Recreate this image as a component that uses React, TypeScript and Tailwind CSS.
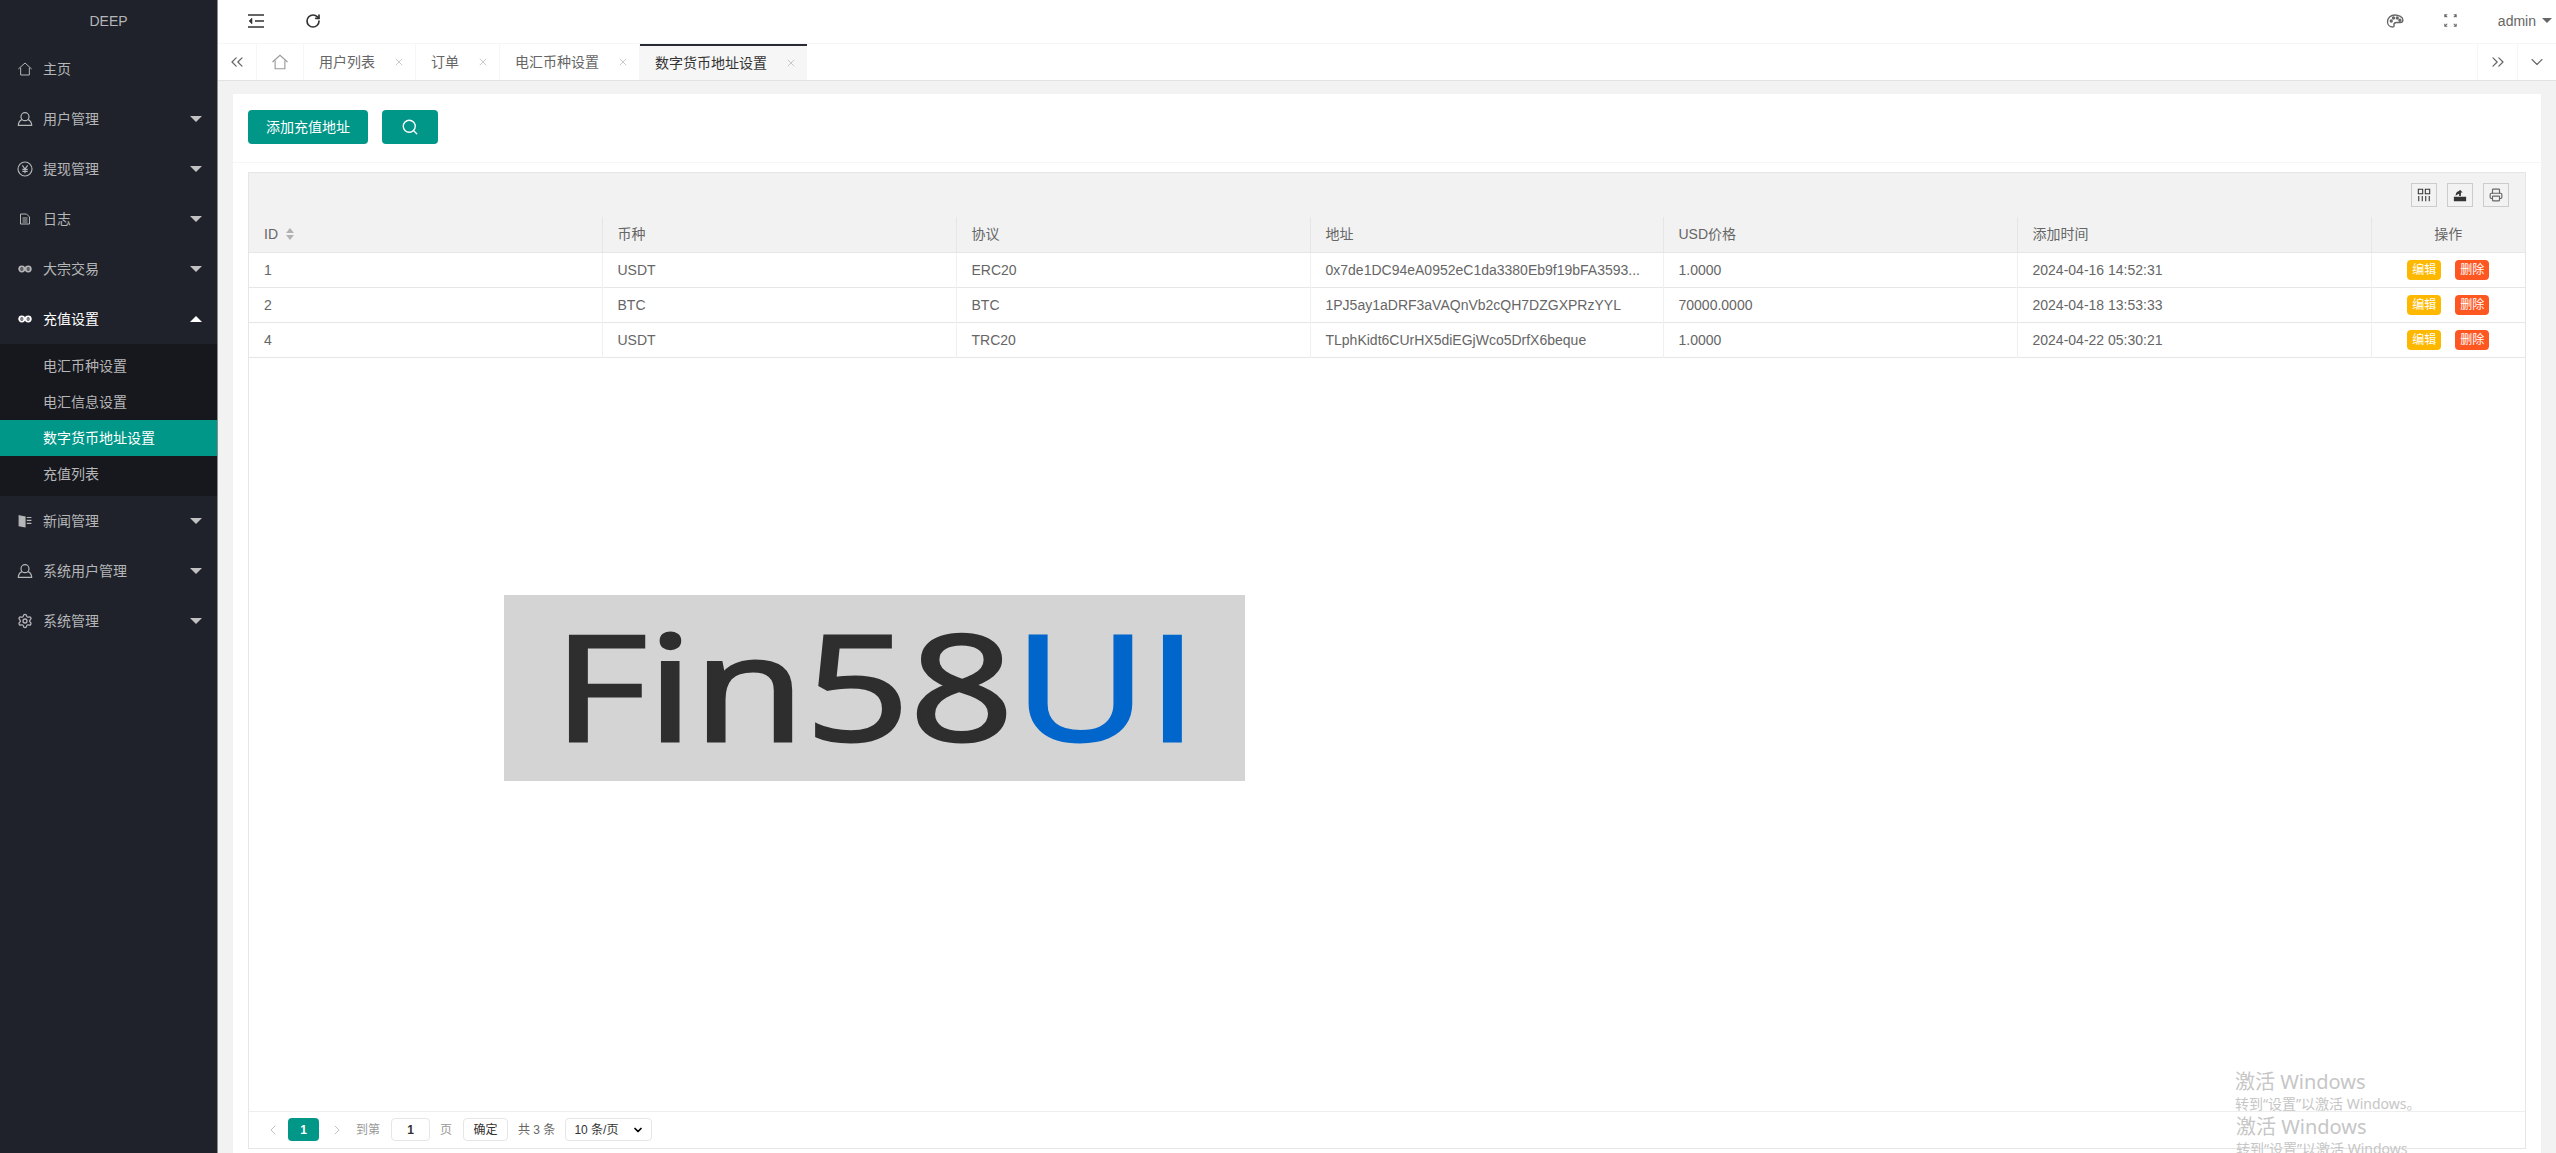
import { ChevronDown, ChevronLeft, ChevronRight, ChevronsLeft, ChevronsRight, Printer, RotateCw, Search, Settings, X } from 'lucide-react';
import type { ReactNode } from 'react';

function HomeIcon({ className }: { className?: string }) {
  return (
    <svg viewBox="0 0 24 24" fill="none" stroke="currentColor" strokeWidth="1.5" className={className}>
      <path d="M2 12 12 3l10 9" />
      <path d="M5.5 10v11h13V10" />
    </svg>
  );
}

function UserIcon() {
  return (
    <svg viewBox="0 0 24 24" fill="none" stroke="currentColor" strokeWidth="1.8" className="h-4 w-4">
      <circle cx="12" cy="8.5" r="6" />
      <path d="M7.5 13C4 14.5 2 17 2 21.5h20c0-4.500-2-7-5.500-8.500" />
    </svg>
  );
}

function YenIcon() {
  return (
    <svg viewBox="0 0 24 24" fill="none" stroke="currentColor" strokeWidth="1.7" className="h-4 w-4">
      <circle cx="12" cy="12" r="10.500" />
      <path d="m8 6.500 4 5.500 4-5.500M12 12v6.500M8 12.500h8M8 15.500h8" />
    </svg>
  );
}

function LogIcon() {
  return (
    <svg viewBox="0 0 24 24" fill="none" stroke="currentColor" strokeWidth="2" className="h-3 w-3">
      <path d="M3 2h12l6 6v14H3zM7 10h10M7 14h10M7 18h10" />
    </svg>
  );
}

function LinkIcon() {
  return (
    <svg viewBox="0 0 24 24" fill="none" stroke="currentColor" strokeWidth="2.800" className="h-[14px] w-[14px]">
      <circle cx="6.500" cy="12" r="4.500" />
      <circle cx="17.500" cy="12" r="4.500" />
      <path d="M1 12h22" strokeWidth="1.500" />
    </svg>
  );
}

function NewsIcon() {
  return (
    <svg viewBox="0 0 24 24" fill="none" stroke="currentColor" strokeWidth="2" className="h-[14px] w-[14px]">
      <path d="M2 3l10 2v17L2 20z" fill="currentColor" />
      <path d="M15 6h8M15 11h8M15 16h8" />
    </svg>
  );
}

function Caret({ up, color = 'gray' }: { up?: boolean; color?: string }) {
  if (up) {
    return <span className="h-0 w-0 border-x-[6px] border-b-[6px] border-x-transparent border-b-white" />;
  }
  return (
    <span
      className={
        color === 'gray'
          ? 'h-0 w-0 border-x-[6px] border-t-[6px] border-x-transparent border-t-[#c2c2c3]'
          : 'h-0 w-0 border-x-[5px] border-t-[5px] border-x-transparent border-t-[#666666]'
      }
    />
  );
}

function NavItem({ icon, label, open }: { icon: ReactNode; label: string; open?: boolean }) {
  return (
    <div className={`flex h-[50px] items-center pl-[17px] pr-[15px] ${open ? 'text-white' : 'text-[#b5b6b8]'}`}>
      <span className="flex w-[26px] items-center justify-start">
        <span className="flex w-4 justify-center">{icon}</span>
      </span>
      <span className="flex-1">{label}</span>
      {label !== '主页' && <Caret up={open} />}
    </div>
  );
}

function SubItem({ label, active }: { label: string; active?: boolean }) {
  return (
    <div className={`flex h-9 items-center pl-[43px] ${active ? 'bg-[#009688] text-white' : 'text-[#b5b6b8]'}`}>
      {label}
    </div>
  );
}

function Sidebar() {
  return (
    <aside className="flex h-full w-[218px] shrink-0 flex-col border-r border-[#8a8a8a] bg-[#1f222a] text-sm">
      <div className="flex h-11 items-center justify-center pb-[3px] text-[#b5b6b8]">DEEP</div>
      <NavItem icon={<HomeIcon className="h-4 w-4" />} label="主页" />
      <NavItem icon={<UserIcon />} label="用户管理" />
      <NavItem icon={<YenIcon />} label="提现管理" />
      <NavItem icon={<LogIcon />} label="日志" />
      <NavItem icon={<LinkIcon />} label="大宗交易" />
      <NavItem icon={<LinkIcon />} label="充值设置" open />
      <div className="bg-[#17181d] py-1">
        <SubItem label="电汇币种设置" />
        <SubItem label="电汇信息设置" />
        <SubItem label="数字货币地址设置" active />
        <SubItem label="充值列表" />
      </div>
      <NavItem icon={<NewsIcon />} label="新闻管理" />
      <NavItem icon={<UserIcon />} label="系统用户管理" />
      <NavItem icon={<Settings className="h-4 w-4" />} label="系统管理" />
    </aside>
  );
}

function TopBar() {
  return (
    <div className="flex h-11 items-center justify-between border-b border-[#f6f6f6] bg-white pb-[2px] pl-[30px] pr-[4px] text-[#333333]">
      <div className="flex items-center gap-[41px]">
        <svg viewBox="0 0 16 16" fill="none" stroke="currentColor" strokeWidth="1.500" className="h-4 w-4">
          <path d="M0 2h16M7 8h9M0 14h16" />
          <path d="M4 5 1 8l3 3z" fill="currentColor" strokeWidth="0.500" />
        </svg>
        <RotateCw className="h-4 w-4" strokeWidth={2.500} />
      </div>
      <div className="flex items-center text-[#666666]">
        <svg viewBox="0 0 24 24" fill="none" stroke="currentColor" strokeWidth="1.800" className="h-[18px] w-[18px]">
          <path d="M12 4C6 4 2 8 2 13c0 4 3 7 7 7 2 0 2-1.500 1.500-3 0-2 1.500-3 3.500-3h5c2 0 3.500-1 3.500-3.500C22.500 7 17 4 12 4z" />
          <circle cx="7" cy="12" r="1.300" fill="currentColor" />
          <circle cx="10" cy="8" r="1.300" fill="currentColor" />
          <circle cx="15" cy="8" r="1.300" fill="currentColor" />
          <circle cx="18.500" cy="11" r="1.300" fill="currentColor" />
        </svg>
        <svg viewBox="0 0 16 16" fill="none" stroke="currentColor" strokeWidth="1.300" className="ml-[40px] h-[13px] w-[13px]">
          <path d="M1 4V1h3M12 1h3v3M1 12v3h3M15 12v3h-3M1 1l3 3M15 1l-3 3M1 15l3-3M15 15l-3-3" />
        </svg>
        <span className="ml-[41px] mr-[6px] text-sm">admin</span>
        <Caret color="dark" />
      </div>
    </div>
  );
}

const tabs = [
  { label: '用户列表', width: 'w-[112px]' },
  { label: '订单', width: 'w-[84px]' },
  { label: '电汇币种设置', width: 'w-[140px]' },
];

function TabBar() {
  return (
    <div className="flex h-[37px] shrink-0 border-b border-[#e2e2e2] bg-white text-sm text-[#666666]">
      <div className="flex w-[39px] items-center justify-center border-r border-[#f6f6f6]">
        <ChevronsLeft className="h-5 w-5" strokeWidth={1.500} />
      </div>
      <div className="flex w-[47px] items-center justify-center border-r border-[#f6f6f6] text-[#999999]">
        <HomeIcon className="h-[18px] w-[18px]" />
      </div>
      {tabs.map((tab) => (
        <div key={tab.label} className={`flex ${tab.width} items-center justify-between border-r border-[#f6f6f6] pl-[15px] pr-[10px]`}>
          <span>{tab.label}</span>
          <X className="h-3 w-3 text-[#b8b8b8]" strokeWidth={1.500} />
        </div>
      ))}
      <div className="flex w-[167px] items-center justify-between border-t-2 border-[#292b34] bg-[#f6f6f6] pl-[15px] pr-[10px] text-[#333333]">
        <span>数字货币地址设置</span>
        <X className="h-3 w-3 text-[#b8b8b8]" strokeWidth={1.500} />
      </div>
      <div className="flex-1" />
      <div className="flex w-10 items-center justify-center border-l border-[#f6f6f6]">
        <ChevronsRight className="h-5 w-5" strokeWidth={1.500} />
      </div>
      <div className="flex w-[39px] items-center justify-center border-l border-[#f6f6f6]">
        <ChevronDown className="h-5 w-5" strokeWidth={1.300} />
      </div>
    </div>
  );
}

function ToolButton({ children }: { children: ReactNode }) {
  return (
    <span className="flex h-6 w-[26px] items-center justify-center border border-[#cccccc] text-[#333333]">
      {children}
    </span>
  );
}

const columns = [
  { label: 'ID', key: 'id' },
  { label: '币种', key: 'coin' },
  { label: '协议', key: 'protocol' },
  { label: '地址', key: 'address' },
  { label: 'USD价格', key: 'price' },
  { label: '添加时间', key: 'time' },
];

const rows = [
  { id: '1', coin: 'USDT', protocol: 'ERC20', address: '0x7de1DC94eA0952eC1da3380Eb9f19bFA3593...', price: '1.0000', time: '2024-04-16 14:52:31' },
  { id: '2', coin: 'BTC', protocol: 'BTC', address: '1PJ5ay1aDRF3aVAQnVb2cQH7DZGXPRzYYL', price: '70000.0000', time: '2024-04-18 13:53:33' },
  { id: '4', coin: 'USDT', protocol: 'TRC20', address: 'TLphKidt6CUrHX5diEGjWco5DrfX6beque', price: '1.0000', time: '2024-04-22 05:30:21' },
];

function DataTable() {
  return (
    <table className="w-full table-fixed border-collapse text-sm text-[#666666]">
      <colgroup>
        <col className="w-[353px]" />
        <col className="w-[354px]" />
        <col className="w-[354px]" />
        <col className="w-[353px]" />
        <col className="w-[354px]" />
        <col className="w-[354px]" />
        <col />
      </colgroup>
      <thead>
        <tr className="h-[35px] bg-[#f2f2f2]">
          {columns.map((col, i) => (
            <th key={col.key} className={`px-[15px] text-left font-normal ${i > 0 ? 'border-l border-[#e6e6e6]' : ''}`}>
              <span className="flex items-center gap-2">
                {col.label}
                {i === 0 && (
                  <span className="flex flex-col gap-[2px]">
                    <span className="h-0 w-0 border-x-4 border-b-[5px] border-x-transparent border-b-[#b2b2b2]" />
                    <span className="h-0 w-0 border-x-4 border-t-[5px] border-x-transparent border-t-[#b2b2b2]" />
                  </span>
                )}
              </span>
            </th>
          ))}
          <th className="border-l border-[#e6e6e6] text-center font-normal">操作</th>
        </tr>
      </thead>
      <tbody>
        {rows.map((row) => (
          <tr key={row.id} className="h-[35px] border-t border-[#e6e6e6]">
            {columns.map((col, i) => (
              <td key={col.key} className={`truncate px-[15px] ${i > 0 ? 'border-l border-[#f0f0f0]' : ''}`}>
                {row[col.key as keyof typeof row]}
              </td>
            ))}
            <td className="border-l border-[#f0f0f0]">
              <div className="flex justify-center gap-[14px] text-xs text-white">
                <span className="flex h-5 w-[34px] items-center justify-center rounded-sm bg-[#ffb800]">编辑</span>
                <span className="flex h-5 w-[34px] items-center justify-center rounded-sm bg-[#ff5722]">删除</span>
              </div>
            </td>
          </tr>
        ))}
        <tr className="h-0 border-t border-[#e6e6e6]" />
      </tbody>
    </table>
  );
}

function Pagination() {
  return (
    <div className="flex h-[37px] shrink-0 items-center border-t border-[#eeeeee] pb-[1px] pl-[16px] text-xs text-[#999999]">
      <ChevronLeft className="h-4 w-4 text-[#c2c2c2]" strokeWidth={1.500} />
      <span className="ml-[7px] flex h-[23px] w-[31px] items-center justify-center rounded-sm bg-[#009688] font-bold text-white">1</span>
      <ChevronRight className="ml-[10px] h-4 w-4 text-[#c2c2c2]" strokeWidth={1.500} />
      <span className="ml-[11px]">到第</span>
      <span className="ml-[11px] flex h-[23px] w-[39px] items-center justify-center rounded-sm border border-[#e6e6e6] font-bold text-[#333333]">1</span>
      <span className="ml-[10px]">页</span>
      <span className="ml-[11px] flex h-[23px] w-[45px] items-center justify-center rounded-sm border border-[#e6e6e6] text-[#333333]">确定</span>
      <span className="ml-[10px] text-[#666666]">共 3 条</span>
      <span className="ml-[10px] flex h-[23px] w-[87px] items-center justify-between rounded-sm border border-[#e6e6e6] pl-2 pr-[7px] text-[#333333]">
        10 条/页
        <ChevronDown className="h-3 w-3 text-black" strokeWidth={3.500} />
      </span>
    </div>
  );
}

export default function App() {
  return (
    <div className="relative flex h-[1153px] w-full overflow-hidden bg-[#f2f2f2] font-['Liberation_Sans','Noto_Sans_CJK_SC',sans-serif]">
      <Sidebar />
      <main className="flex min-w-0 flex-1 flex-col">
        <TopBar />
        <TabBar />
        <div className="min-h-0 flex-1 pb-0 pl-[15px] pr-[15px] pt-[13px]">
          <div className="flex h-full flex-col bg-white">
            <div className="flex h-[69px] shrink-0 items-start gap-[14px] border-b border-[#f6f6f6] pl-[15px] pt-4 text-sm text-white">
              <button className="flex h-[34px] w-[120px] items-center justify-center rounded-sm bg-[#009688]">添加充值地址</button>
              <button className="flex h-[34px] w-[56px] items-center justify-center rounded-sm bg-[#009688]">
                <Search className="h-[18px] w-[18px]" strokeWidth={1.800} />
              </button>
            </div>
            <div className="mx-[15px] mb-1 mt-[9px] flex min-h-0 flex-1 flex-col border border-[#e6e6e6]">
              <div className="flex h-11 shrink-0 items-center justify-end gap-[10px] bg-[#f2f2f2] pr-4">
                <ToolButton>
                  <svg viewBox="0 0 16 16" fill="none" stroke="currentColor" strokeWidth="1.200" className="h-[14px] w-[14px]">
                    <path d="M1.500 1.500h5v5h-5zM9.500 1.500h5v5h-5zM2 9v6M6 9v6M10 9v6M14 9v6" />
                  </svg>
                </ToolButton>
                <ToolButton>
                  <svg viewBox="0 0 16 16" fill="currentColor" className="h-[14px] w-[14px]">
                    <path d="M1 10h14v5H1zM8 2l3 3H9v4H7V6.500C5 7 4 8 3 9c0-3 1.500-5 4-5.500z" />
                  </svg>
                </ToolButton>
                <ToolButton>
                  <Printer className="h-[14px] w-[14px] text-[#666666]" />
                </ToolButton>
              </div>
              <div className="min-h-0 flex-1">
                <DataTable />
              </div>
              <Pagination />
            </div>
          </div>
        </div>
      </main>

      {/* logo pasted over the page */}
      <div className="absolute left-[504px] top-[595px] flex h-[186px] w-[741px] items-center bg-[#d4d4d4] pb-[6px] pl-[49px] font-['Open_Sans',sans-serif] text-[146px] leading-none text-[#2e2e2e] [-webkit-text-stroke:3px]">
        <div className="origin-left scale-x-[1.25]">
          Fin58<span className="text-[#0066cc]">UI</span>
        </div>
      </div>

      {/* watermark, captured twice */}
      <div className="pointer-events-none absolute left-[2235px] top-[1068px] font-['Noto_Sans','Noto_Sans_CJK_SC',sans-serif] text-[#c6c6c6]">
        <div className="text-xl leading-[27px]">激活 Windows</div>
        <div className="text-sm leading-[18px]">转到“设置”以激活 Windows。</div>
      </div>
      <div className="pointer-events-none absolute left-[2236px] top-[1113px] font-['Noto_Sans','Noto_Sans_CJK_SC',sans-serif] text-[#c6c6c6]">
        <div className="text-xl leading-[27px]">激活 Windows</div>
        <div className="text-sm leading-[18px]">转到“设置”以激活 Windows</div>
      </div>
    </div>
  );
}
